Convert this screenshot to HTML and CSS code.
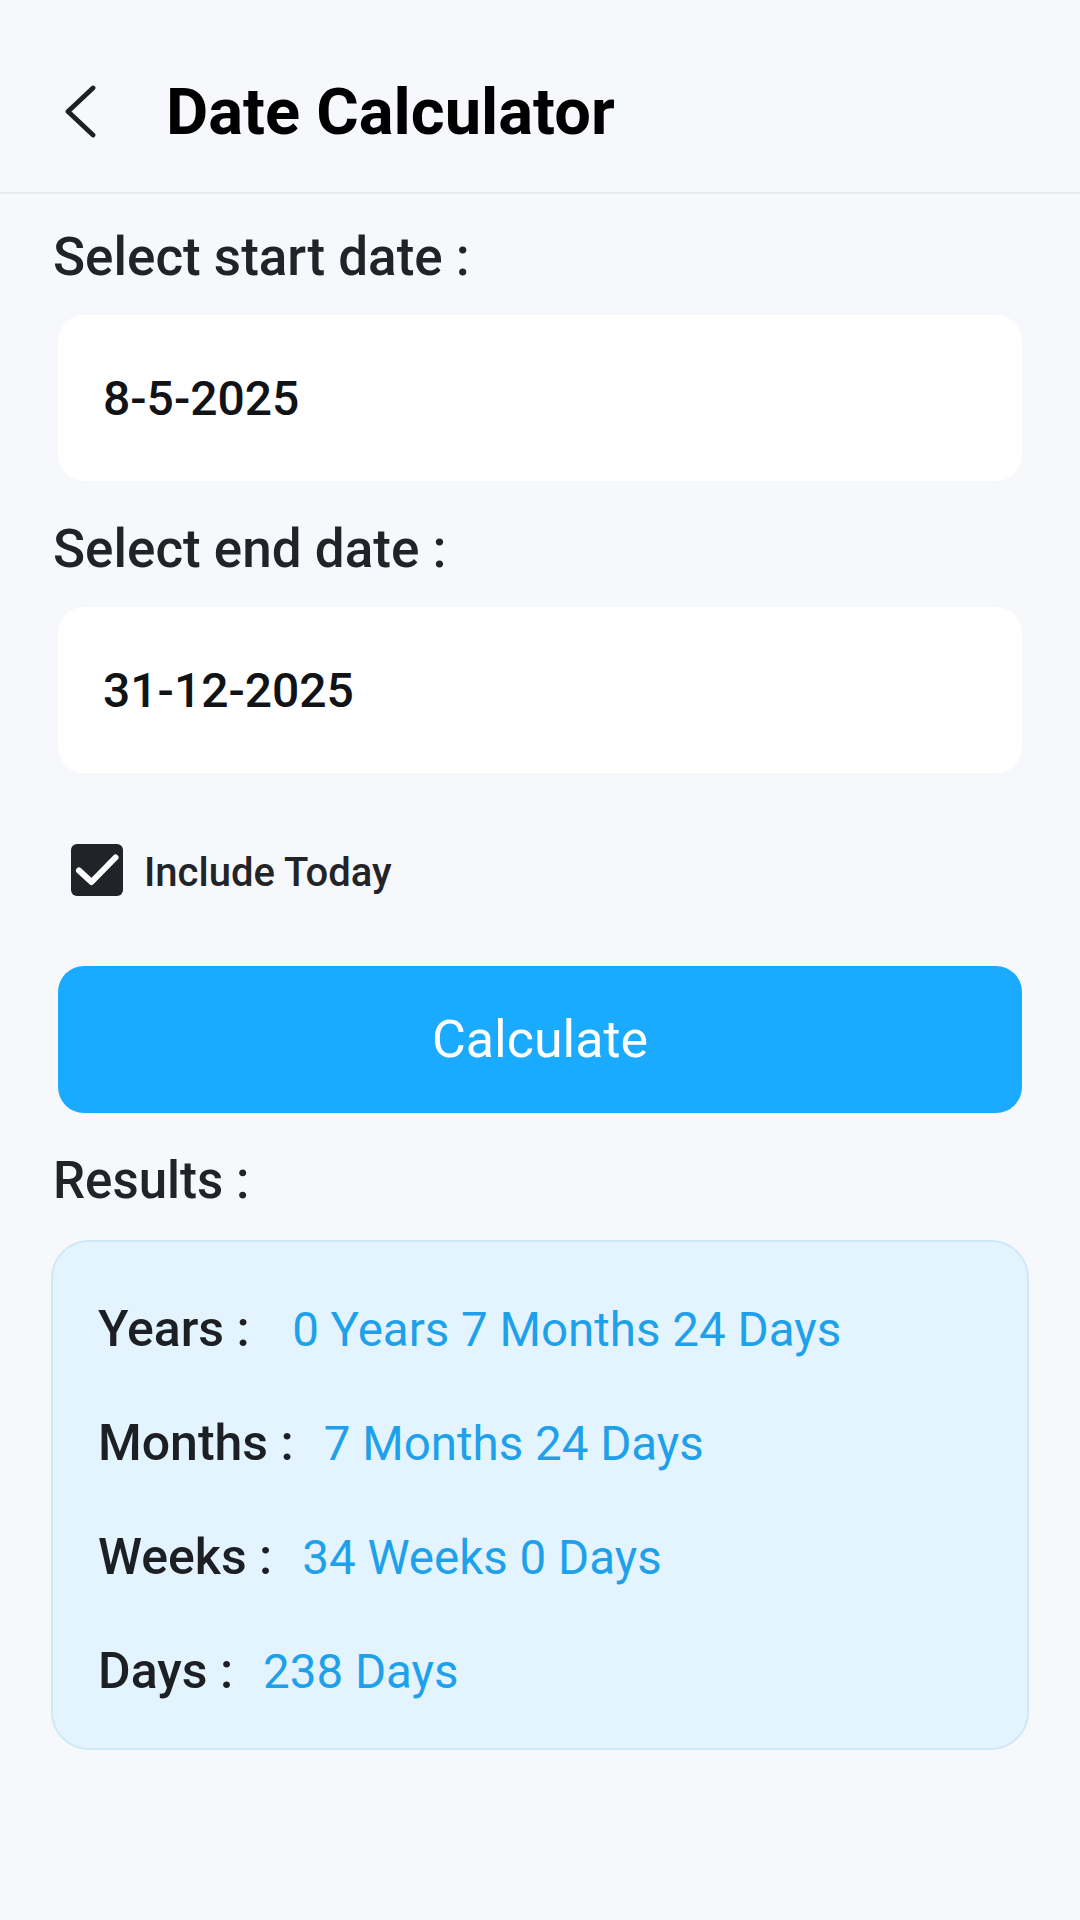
FILE: index.html
```html
<!DOCTYPE html>
<html lang="en">
<head>
<meta charset="utf-8">
<title>Date Calculator</title>
<link rel="stylesheet" href="styles.css">
</head>
<body>
<header class="appbar">
  <svg class="back" width="34" height="56" viewBox="0 0 34 56" aria-hidden="true">
    <path d="M31 4 L6 27.5 L31 51" fill="none" stroke="#1d1f23" stroke-width="4.8" stroke-linecap="round" stroke-linejoin="round"/>
  </svg>
  <h1 class="title">Date Calculator</h1>
</header>
<main class="content">
  <div class="field-label first">Select start date :</div>
  <div class="date-box">8-5-2025</div>
  <div class="field-label second">Select end date :</div>
  <div class="date-box">31-12-2025</div>
  <label class="check-row">
    <span class="checkbox">
      <svg width="52" height="52" viewBox="0 0 52 52" aria-hidden="true">
        <path d="M8 26.5 L20.5 38 L44.5 13.5" fill="none" stroke="#ffffff" stroke-width="6" stroke-linecap="round" stroke-linejoin="round"/>
      </svg>
    </span>
    <span class="check-text">Include Today</span>
  </label>
  <button class="calc-btn" type="button">Calculate</button>
  <div class="results-label">Results :</div>
  <section class="results-card">
    <div class="row"><span class="key">Years :&nbsp;</span><span class="val">0 Years 7 Months 24 Days</span></div>
    <div class="row"><span class="key">Months :</span><span class="val">7 Months 24 Days</span></div>
    <div class="row"><span class="key">Weeks :</span><span class="val">34 Weeks 0 Days</span></div>
    <div class="row"><span class="key">Days :</span><span class="val">238 Days</span></div>
  </section>
</main>
</body>
</html>
```
FILE: styles.css
```css
html, body {
  margin: 0;
  padding: 0;
}
body {
  width: 1080px;
  min-height: 1920px;
  background: #f6f8fc;
  font-family: Roboto, "Liberation Sans", Arial, sans-serif;
  color: #1d2025;
}
.appbar {
  box-sizing: border-box;
  height: 194px;
  padding: 38px 0 6px 62px;
  display: flex;
  align-items: center;
  border-bottom: 2px solid #e8eaef;
}
.back {
  display: block;
  flex: none;
}
.title {
  margin: 0 0 0 70px;
  font-size: 65px;
  line-height: 72px;
  font-weight: 700;
  color: #000;
}
.content {
  padding: 0 53px;
  display: flex;
  flex-direction: column;
}
.field-label {
  font-size: 53px;
  line-height: 60px;
  font-weight: 500;
  color: #212328;
}
.field-label.first { margin-top: 33px; }
.field-label.second { margin-top: 38px; }
.date-box {
  box-sizing: border-box;
  margin: 28px 5px 0;
  height: 166px;
  background: #ffffff;
  border-radius: 26px;
  padding-left: 45px;
  display: flex;
  align-items: center;
  font-size: 48px;
  font-weight: 500;
  color: #111316;
}
.check-row {
  margin: 71px 0 0 18px;
  display: flex;
  align-items: center;
  gap: 21px;
}
.checkbox {
  width: 52px;
  height: 52px;
  border-radius: 6px;
  background: #202327;
  display: block;
  flex: none;
}
.checkbox svg { display: block; }
.check-text {
  font-size: 40px;
  font-weight: 500;
  color: #222428;
  padding-top: 4px;
}
.calc-btn {
  margin: 70px 5px 0;
  height: 147px;
  border: none;
  border-radius: 26px;
  background: #1aabff;
  color: #ffffff;
  font-family: Roboto, "Liberation Sans", Arial, sans-serif;
  font-size: 52px;
  font-weight: 400;
  padding: 0;
}
.results-label {
  margin-top: 38px;
  font-size: 51px;
  line-height: 60px;
  font-weight: 500;
  color: #212328;
}
.results-card {
  margin: 29px -2px 0;
  background: #e3f4fe;
  border: 2px solid #cfe8f8;
  border-radius: 38px;
  padding: 57px 40px 46px 45px;
  display: flex;
  flex-direction: column;
  gap: 53px;
}
.row {
  display: flex;
  align-items: baseline;
  gap: 30px;
  line-height: 60px;
}
.key {
  font-size: 50px;
  font-weight: 500;
  color: #1c1f24;
}
.val {
  font-size: 47.5px;
  font-weight: 400;
  color: #1ea1ea;
}
```
